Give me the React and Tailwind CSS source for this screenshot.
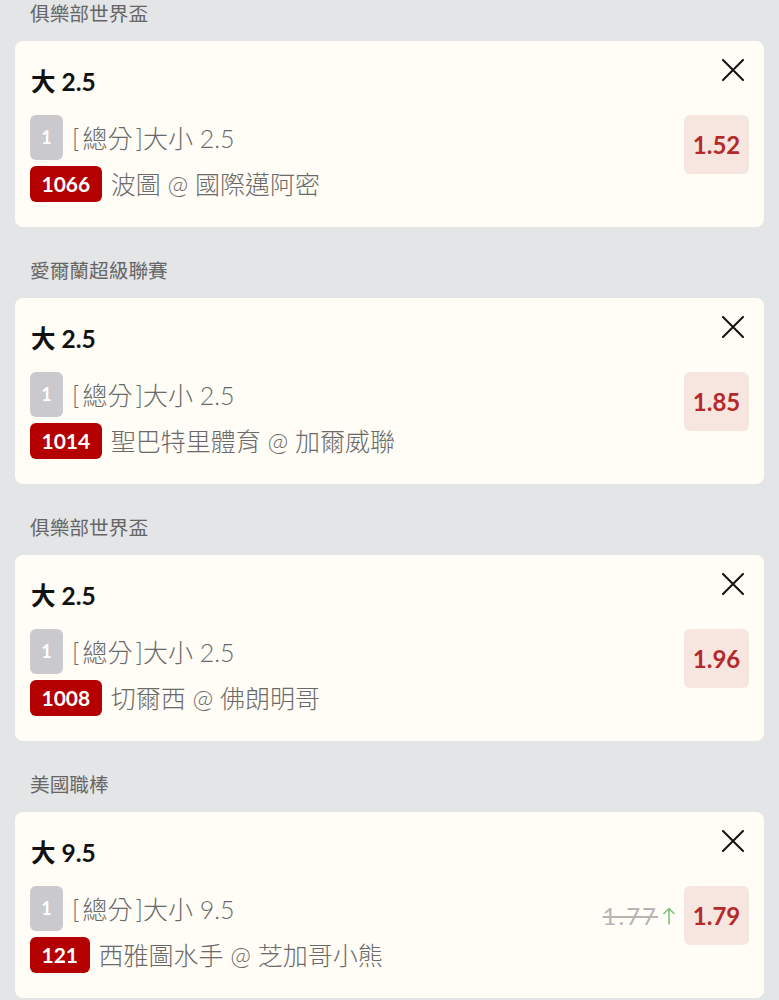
import React from 'react';

const bets = [
  { league: '俱樂部世界盃', title: '大 2.5', market: '[總分]大小 2.5', code: '1066', match: '波圖 @ 國際邁阿密', odds: '1.52' },
  { league: '愛爾蘭超級聯賽', title: '大 2.5', market: '[總分]大小 2.5', code: '1014', match: '聖巴特里體育 @ 加爾威聯', odds: '1.85' },
  { league: '俱樂部世界盃', title: '大 2.5', market: '[總分]大小 2.5', code: '1008', match: '切爾西 @ 佛朗明哥', odds: '1.96' },
  { league: '美國職棒', title: '大 9.5', market: '[總分]大小 9.5', code: '121', match: '西雅圖水手 @ 芝加哥小熊', odds: '1.79', oldOdds: '1.77' },
];

function CloseIcon() {
  return (
    <svg width="22" height="22" viewBox="0 0 22 22" className="shrink-0">
      <path d="M1 1 L21 21 M21 1 L1 21" stroke="#111" strokeWidth="2" strokeLinecap="round" />
    </svg>
  );
}

function UpArrow() {
  return (
    <svg width="12" height="18" viewBox="0 0 12 18">
      <path d="M6 17 V1.5 M1 6.5 L6 1.5 L11 6.5" fill="none" stroke="#7cc47c" strokeWidth="1.6" strokeLinecap="round" strokeLinejoin="round" />
    </svg>
  );
}

// market line: brackets a little wider than Lato's
function Market({ text }) {
  const m = text.match(/^\[(.*)\](.*)$/);
  if (!m) return text;
  return (
    <>
      <span className="mr-[3px]">[</span>{m[1]}<span className="ml-[3px]">]</span>{m[2]}
    </>
  );
}

function BetCard({ bet }) {
  return (
    <div className="bg-[#fffdf6] rounded-lg px-[15px] pt-[18px] pb-[25px]">
      {/* header */}
      <div className="flex justify-between items-start">
        <div className="mt-[7px] ml-[1px] text-[24.5px] leading-[32px] font-bold text-[#111]">{bet.title}</div>
        <div className="mr-[5px]">
          <CloseIcon />
        </div>
      </div>

      {/* body */}
      <div className="mt-[17px] flex justify-between items-start">
        <div className="flex flex-col gap-[6px]">
          <div className="flex items-center h-[45px]">
            <div className="w-[33px] h-[45px] rounded-md bg-[#c9c9ce] text-white font-bold text-[18px] flex items-center justify-center">1</div>
            <span className="ml-[9px] text-[25px] leading-[32px] font-light text-[#6a6a6a]">
              <Market text={bet.market} />
            </span>
          </div>
          <div className="flex items-center h-[36px]">
            <div className="h-[36px] px-[11.5px] rounded-md bg-[#b40000] text-white font-bold text-[21px] leading-[36px]">{bet.code}</div>
            <span className="ml-[9px] text-[25px] leading-[32px] font-light text-[#6a6a6a]">{bet.match}</span>
          </div>
        </div>

        <div className="flex items-center">
          {bet.oldOdds && (
            <div className="flex items-center mr-[9px]">
              <span className="text-[24px] leading-[32px] tracking-[2px] text-[#b5b5b5] line-through">{bet.oldOdds}</span>
              <span className="ml-[5px]"><UpArrow /></span>
            </div>
          )}
          <div className="w-[65px] h-[59px] rounded-md bg-[#f7e5df] flex items-center justify-center text-[24px] font-bold text-[#b42a2a]">
            {bet.odds}
          </div>
        </div>
      </div>
    </div>
  );
}

export default function App() {
  return (
    <div
      className="min-h-screen bg-[#e4e5e7] px-[15px]"
      style={{ fontFamily: 'Lato, "Noto Sans CJK TC", sans-serif' }}
    >
      <div className="flex flex-col gap-[30px]">
        {bets.map((bet, i) => (
          <div key={i}>
            <div className="h-[41px] pl-[15px] text-[19.7px] leading-[27px] text-[#666]">{bet.league}</div>
            <BetCard bet={bet} />
          </div>
        ))}
      </div>
    </div>
  );
}
